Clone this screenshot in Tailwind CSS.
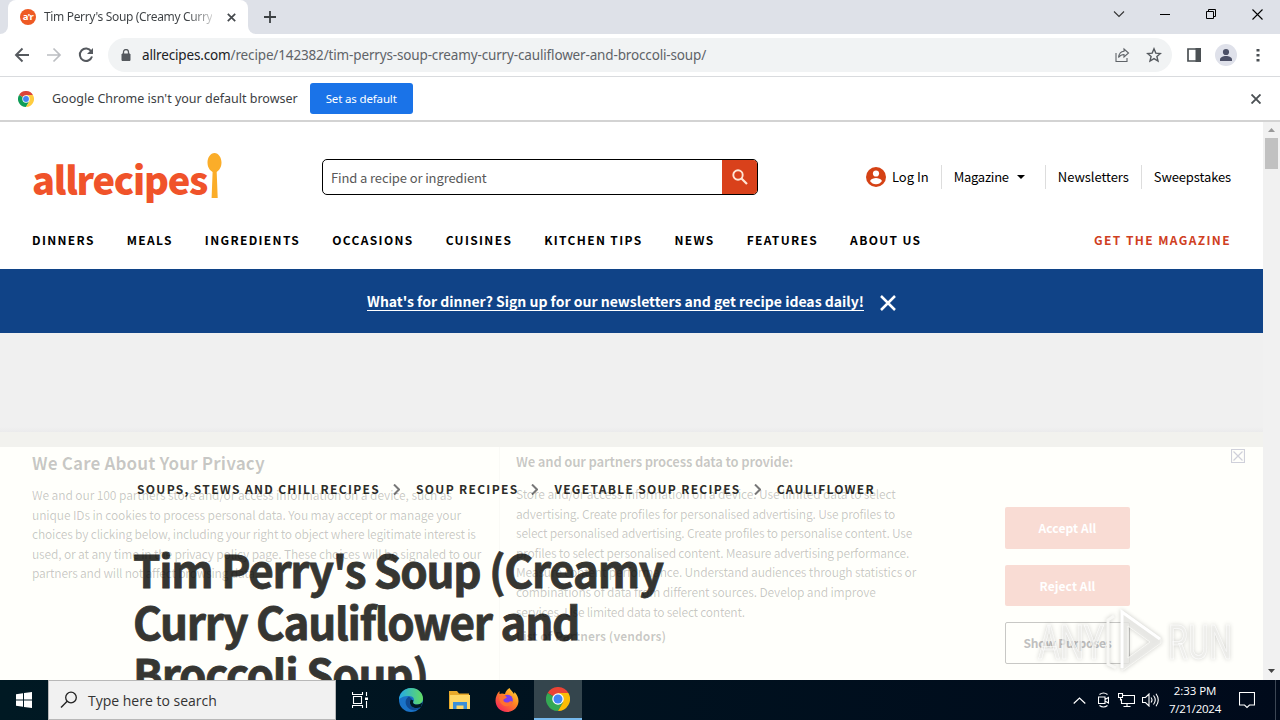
<!DOCTYPE html>
<html lang="en">
<head>
  <meta charset="UTF-8"/>
  <meta name="viewport" content="width=device-width, initial-scale=1.0"/>
  <title>Tim Perry's Soup (Creamy Curry Cauliflower and Broccoli Soup)</title>
  <script src="https://cdn.jsdelivr.net/npm/@tailwindcss/browser@4"></script>
</head>
<body class="w-[1280px] h-[720px] overflow-hidden flex flex-col bg-white font-['Noto_Sans_CJK_JP',sans-serif] text-black whitespace-nowrap">

  <!-- Tab strip -->
  <div class="h-[34px] shrink-0 bg-[#dee1e8] flex items-end font-['Noto_Sans',sans-serif]">
    <div class="w-2 h-[34px] bg-white"><div class="size-full rounded-br-lg bg-[#dee1e8]"></div></div>
    <div class="w-[240px] h-[34px] bg-white rounded-t-lg flex items-center pl-3 pr-3">
      <svg class="size-4 shrink-0" viewBox="0 0 16 16"><circle cx="8" cy="8" r="8" fill="#ee5a24"/><text x="8" y="11" text-anchor="middle" font-size="9.5" font-weight="bold" font-family="Noto Sans" fill="#fff" letter-spacing="-.5">a'r</text></svg>
      <span class="ml-2 w-[172px] overflow-hidden text-[12px] leading-4 tracking-[-0.34px]"><span class="bg-linear-to-r from-[#3c4043] from-85% to-[#d0d0d0] bg-clip-text text-transparent">Tim Perry's Soup (Creamy Curry</span></span>
      <svg class="size-[9px] ml-auto shrink-0" viewBox="0 0 9 9"><path d="M.8.8l7.400 7.400M8.200.8L.8 8.200" stroke="#45494d" stroke-width="1.700"/></svg>
    </div>
    <div class="w-2 h-[34px] bg-white"><div class="size-full rounded-bl-lg bg-[#dee1e8]"></div></div>
    <svg class="size-3 ml-2 mb-[11px]" viewBox="0 0 12 12"><path d="M6 0v12M0 6h12" stroke="#3c4043" stroke-width="1.800"/></svg>
    <div class="ml-auto h-[34px] flex items-center pb-[6px] pr-[17px] gap-[35px]">
      <svg class="w-[12px] h-[10px]" viewBox="0 0 12 10"><path d="M1 2.500l5 5 5-5" fill="none" stroke="#333" stroke-width="1.100"/></svg>
      <svg class="w-[11px] h-[10px]" viewBox="0 0 11 10"><path d="M0 5.500h10" stroke="#000"/></svg>
      <svg class="w-[11px] h-[10px]" viewBox="0 0 11 10"><path d="M.5 2.500h7v7h-7zM2.500 2.500v-2h7v7h-2" fill="none" stroke="#000"/></svg>
      <svg class="w-[11px] h-[11px]" viewBox="0 0 11 11"><path d="M.5.5l10 10M10.500.5l-10 10" stroke="#000" stroke-width="1.100"/></svg>
    </div>
  </div>

  <!-- Toolbar -->
  <div class="h-[43px] shrink-0 border-b border-[#d9dbde] flex items-center pl-[14px] pr-[10px]">
    <svg class="size-4" viewBox="0 0 16 16"><path d="M15 8H2M8.500 1.500L2 8l6.500 6.500" fill="none" stroke="#55595e" stroke-width="1.900"/></svg>
    <svg class="size-4 ml-4" viewBox="0 0 16 16"><path d="M1 8h13M7.500 1.500L14 8l-6.500 6.500" fill="none" stroke="#bcbec2" stroke-width="1.700"/></svg>
    <svg class="size-4 ml-4" viewBox="0 0 16 16"><path d="M13.200 4.200A6.200 6.200 0 1 0 14 9.500" fill="none" stroke="#55595e" stroke-width="2"/><path d="M15 1v6H9z" fill="#55595e"/></svg>
    <div class="ml-[14px] w-[1064px] h-[34px] rounded-full bg-[#f1f3f4] flex items-center pl-[13px] pr-[10px]">
      <svg class="w-[10px] h-3" viewBox="0 0 10 12"><path d="M1 5h8v6.500H1z" fill="#55595e" stroke="#55595e"/><path d="M2.500 5V3a2.500 2.500 0 0 1 5 0v2" fill="none" stroke="#55595e" stroke-width="1.300"/></svg>
      <span class="ml-[11px] text-[13.5px] leading-5 tracking-[-0.15px] font-['Noto_Sans',sans-serif] text-[#5f6368]"><span class="text-[#202124]">allrecipes.com</span>/recipe/142382/tim-perrys-soup-creamy-curry-cauliflower-and-broccoli-soup/</span>
      <svg class="size-4 ml-auto" viewBox="0 0 16 16"><path d="M2 6v8.500h11V11M10 2l4.500 4L10 10V7.500C7.500 7.500 6 8.500 4.500 10.500 5 7 7 4.500 10 4.300z" fill="none" stroke="#5f6368" stroke-width="1.100"/></svg>
      <svg class="size-4 ml-4" viewBox="0 0 16 16"><path d="M8 1.800l1.800 4.300 4.600.4-3.500 3 1.100 4.500L8 11.600 4 14l1.100-4.500-3.500-3 4.600-.4z" fill="none" stroke="#55595e" stroke-width="1.400"/></svg>
    </div>
    <svg class="size-[14px] ml-[15px]" viewBox="0 0 14 14"><path d="M1 1h12v12H1z" fill="none" stroke="#4b5054" stroke-width="1.700"/><path d="M8.500 0H14v14H8.500z" fill="#4b5054"/></svg>
    <svg class="size-[22px] ml-[14px]" viewBox="0 0 22 22"><circle cx="11" cy="11" r="11" fill="#dfe1ea"/><circle cx="11" cy="8" r="3.100" fill="#4c5066"/><path d="M5 17v-1.500c0-2 3-3.500 6-3.500s6 1.500 6 3.500V17z" fill="#4c5066"/></svg>
    <svg class="w-1 h-[14px] ml-auto mr-[10px]" viewBox="0 0 4 14"><path d="M.5 1h3v2.500h-3zM.5 6h3v2.500h-3zM.5 11h3v2.500h-3z" fill="#4b5054"/></svg>
  </div>

  <!-- Default browser bar -->
  <div class="h-[45px] shrink-0 border-b-2 border-[#d3d3d3] flex items-center pl-[18px] pr-[19px] font-['Noto_Sans',sans-serif]">
    <svg class="size-4" viewBox="0 0 48 48"><path d="M24 24L3.200 12A24 24 0 0 1 44.800 12z" fill="#db4437"/><path d="M24 24L3.200 12A24 24 0 0 0 24 48l10.400-18z" fill="#0f9d58"/><path d="M24 24l10.400 6L24 48A24 24 0 0 0 44.800 12H24z" fill="#ffcd40"/><circle cx="24" cy="24" r="11" fill="#fff"/><circle cx="24" cy="24" r="8.800" fill="#4285f4"/></svg>
    <span class="ml-[18px] mt-px text-[12.5px] leading-5 text-[#3c4043]">Google Chrome isn't your default browser</span>
    <button class="ml-3 w-[103px] h-[31px] rounded-[3px] bg-[#1a73e8] text-white text-[11.5px] tracking-[-0.15px]">Set as default</button>
    <svg class="size-[10px] ml-auto" viewBox="0 0 10 10"><path d="M.5.5l9 9M9.500.5l-9 9" stroke="#4b5054" stroke-width="1.900"/></svg>
  </div>

  <div class="h-[558px] shrink-0 flex">
    <!-- Page -->
    <div class="relative w-[1263px] h-[558px] overflow-hidden flex flex-col bg-[#fffffb]">
      <header class="h-[147px] shrink-0 bg-white px-8">
        <div class="h-[98px] pt-[12px] flex items-center">
          <div class="w-[190px] h-[52px] pt-[2px] flex items-start">
            <span class="w-[175px] mt-[4px] text-[38px] leading-[44px] font-black tracking-[-1.25px] text-[#f0532a]">allrecipes</span>
            <svg class="w-[15px] h-[46px] shrink-0" viewBox="0 0 15 46"><path d="M7.500 0c4 0 7 4.500 7 9.500S12 17.500 9.700 19l1 26H4.600l1-26C3 17.500.5 14.500.5 9.500S3.500 0 7.500 0z" fill="#fbad29"/></svg>
          </div>
          <div class="ml-[100px] w-[436px] h-9 border border-black rounded-[5px] flex items-center overflow-hidden">
            <span class="pl-2 pt-[2px] grow text-[13px] leading-5 tracking-[-0.12px] text-[#595959]">Find a recipe or ingredient</span>
            <div class="w-[35px] h-[34px] bg-[#d9411b] flex items-center justify-center">
              <svg class="size-4" viewBox="0 0 16 16"><circle cx="6" cy="6" r="4.700" fill="none" stroke="#ffe5d5" stroke-width="1.900"/><path d="M9.500 9.500l5.500 5.500" stroke="#ffe5d5" stroke-width="2.200"/></svg>
            </div>
          </div>
          <div class="ml-auto flex items-center text-[13px] leading-[24px]">
            <svg class="size-5" viewBox="0 0 20 20"><circle cx="10" cy="10" r="10" fill="#d54215"/><circle cx="10" cy="6.500" r="3.100" fill="#fff"/><path d="M4 14c1-2.300 4-3 6-3s5 .7 6 3c-1.300 2-3.500 3.300-6 3.300S5.300 16 4 14z" fill="#fff"/></svg>
            <span class="ml-[6px]">Log In</span>
            <span class="ml-3 pl-3 border-l border-[#ddd] tracking-[-0.25px]">Magazine</span>
            <svg class="w-2 h-1 ml-2" viewBox="0 0 8 4"><path d="M0 0h8L4 4z"/></svg>
            <span class="ml-5 pl-3 border-l border-[#ddd] tracking-[-0.05px]">Newsletters</span>
            <span class="ml-3 pl-3 border-l border-[#ddd] tracking-[-0.12px]">Sweepstakes</span>
          </div>
        </div>
        <nav class="h-10 flex items-center gap-8 text-[12px] leading-4 font-bold tracking-[1.34px]">
          <a>DINNERS</a>
          <a>MEALS</a>
          <a>INGREDIENTS</a>
          <a>OCCASIONS</a>
          <a>CUISINES</a>
          <a>KITCHEN TIPS</a>
          <a>NEWS</a>
          <a>FEATURES</a>
          <a>ABOUT US</a>
          <a class="ml-auto text-[#cf401f] tracking-[1.4px]">GET THE MAGAZINE</a>
        </nav>
      </header>

      <div class="h-16 shrink-0 bg-[#104387] flex items-center justify-center gap-4 text-white">
        <a class="mt-px border-b border-white text-[14px] leading-[17px] font-bold">What's for dinner? Sign up for our newsletters and get recipe ideas daily!</a>
        <svg class="size-4 mt-1" viewBox="0 0 16 16"><path d="M1 1l14 14M15 1L1 15" stroke="#fff" stroke-width="2.500"/></svg>
      </div>

      <div class="h-[114px] shrink-0 bg-[#f0f0f0] flex flex-col justify-end">
        <div class="h-[5px] bg-linear-to-b from-[#f0f0f0] to-[#ebebec]"></div>
        <div class="h-[15px] bg-[#f2f2ee]"></div>
      </div>

      <!-- Recipe -->
      <main class="pt-[34px] pl-[137px] text-[#2d2d29]">
        <div class="flex items-center text-[12px] leading-4 font-bold tracking-[1.31px]">
          <span>SOUPS, STEWS AND CHILI RECIPES</span>
          <svg class="w-[7px] h-[11px] ml-[13px] mr-4" viewBox="0 0 7 11"><path d="M1 .5l5 5-5 5" fill="none" stroke="#777" stroke-width="2"/></svg>
          <span>SOUP RECIPES</span>
          <svg class="w-[7px] h-[11px] ml-[13px] mr-4" viewBox="0 0 7 11"><path d="M1 .5l5 5-5 5" fill="none" stroke="#777" stroke-width="2"/></svg>
          <span>VEGETABLE SOUP RECIPES</span>
          <svg class="w-[7px] h-[11px] ml-[13px] mr-4" viewBox="0 0 7 11"><path d="M1 .5l5 5-5 5" fill="none" stroke="#777" stroke-width="2"/></svg>
          <span class="tracking-[1.25px]">CAULIFLOWER</span>
        </div>
        <h1 class="mt-[46px] ml-[-4px] text-[44px] leading-[52px] font-bold tracking-[-1.28px] text-[#363632] [-webkit-text-stroke:0.8px_#363632]">Tim Perry's Soup (Creamy<br/>Curry Cauliflower and<br/>Broccoli Soup)</h1>
      </main>

      <!-- Privacy banner, partly faded in over the recipe -->
      <section class="absolute inset-x-0 top-[325px] h-[233px] flex pl-8 text-black/22">
        <div class="w-[468px] pt-[5px] border-r border-black/2">
          <h2 class="text-[17px] leading-[22px] font-bold tracking-[0.13px]">We Care About Your Privacy</h2>
          <p class="mt-[11px] text-[12px] leading-[19.6px]">
            <span class="tracking-[-0.11px]">We and our 100 partners store and/or access information on a device, such as</span><br/>
            <span class="tracking-[-0.15px]">unique IDs in cookies to process personal data. You may accept or manage your</span><br/>
            <span class="tracking-[-0.21px]">choices by clicking below, including your right to object where legitimate interest is</span><br/>
            <span class="tracking-[-0.17px]">used, or at any time in the privacy policy page. These choices will be signaled to our</span><br/>
            <span class="tracking-[-0.22px]">partners and will not affect browsing data.</span>
          </p>
        </div>
        <div class="ml-4 w-[489px] pt-[4px]">
          <h3 class="text-[13px] leading-[22px] font-bold tracking-[-0.2px]">We and our partners process data to provide:</h3>
          <p class="mt-[11px] text-[12px] leading-[19.6px]">
            <span class="tracking-[-0.15px]">Store and/or access information on a device. Use limited data to select</span><br/>
            <span class="tracking-[-0.2px]">advertising. Create profiles for personalised advertising. Use profiles to</span><br/>
            <span class="tracking-[-0.24px]">select personalised advertising. Create profiles to personalise content. Use</span><br/>
            <span class="tracking-[-0.22px]">profiles to select personalised content. Measure advertising performance.</span><br/>
            <span class="tracking-[-0.18px]">Measure content performance. Understand audiences through statistics or</span><br/>
            <span class="tracking-[-0.15px]">combinations of data from different sources. Develop and improve</span><br/>
            <span class="tracking-[-0.27px]">services. Use limited data to select content.</span>
          </p>
          <p class="mt-[5px] text-[12px] leading-5 font-bold tracking-[0.05px]">List of Partners (vendors)</p>
        </div>
        <div class="w-[125px] pt-[60px] flex flex-col gap-4 text-[12px] leading-4 font-bold">
          <button class="h-[42px] shrink-0 rounded-[2px] bg-[#f9dcd4] text-white tracking-[0.1px]">Accept All</button>
          <button class="h-[41px] shrink-0 rounded-[2px] bg-[#f9dcd4] text-white tracking-[0.1px]">Reject All</button>
          <button class="h-[42px] shrink-0 rounded-[2px] border border-[#c8c8c5] text-[#c0c0c0] tracking-[-0.2px]">Show Purposes</button>
        </div>
        <svg class="size-[14px] ml-[101px] mt-[2px]" viewBox="0 0 14 14"><path d="M.5.5h13v13H.5zM2.500 2.500l9 9M11.500 2.500l-9 9" fill="none" stroke="#cfd0da" stroke-width="1.200"/></svg>
      </section>

      <!-- Watermark -->
      <svg class="absolute left-[1034px] top-[484px] w-[204px] h-[72px] drop-shadow-[0_0_2px_rgba(0,0,0,0.22)]" viewBox="0 0 204 72">
        <g font-family="Roboto" font-size="48" fill="#f1f1ee" fill-opacity=".7" stroke="#fff" stroke-width=".6"><text x="4" y="53" textLength="66" lengthAdjust="spacingAndGlyphs">ANY</text><text x="134" y="53" textLength="64" lengthAdjust="spacingAndGlyphs">RUN</text></g>
        <path d="M80 10l-6 4v44l8 4" fill="none" stroke="#f8f8f5" stroke-width="3"/>
        <path d="M88 5l39 28v4L88 65zM94 20v32l22-16z" fill="#ecece9" fill-opacity=".8" fill-rule="evenodd" stroke="#f6f6f3" stroke-width="1"/>
        <path d="M88 62V6l38 27" fill="none" stroke="#fff" stroke-width="3"/>
      </svg>
    </div>

    <!-- Scrollbar -->
    <div class="w-[17px] h-[558px] bg-[#f1f1f1] flex flex-col items-center">
      <svg class="w-[7px] h-1 mt-[6px]" viewBox="0 0 7 4"><path d="M0 4h7L3.500 0z" fill="#999"/></svg>
      <div class="mt-[6px] w-[13px] h-[31px] bg-[#c1c1c1]"></div>
      <svg class="w-[7px] h-1 mt-auto mb-[7px]" viewBox="0 0 7 4"><path d="M0 0h7L3.500 4z" fill="#444"/></svg>
    </div>
  </div>

  <!-- Taskbar -->
  <div class="h-10 shrink-0 bg-linear-to-r from-[#001923] to-[#000a1b] flex items-center text-white font-['Open_Sans',sans-serif]">
    <div class="w-12 flex justify-center">
      <svg class="size-4" viewBox="0 0 16 16"><path d="M0 2.300l7-1v6.300H0zM8 1.100L16 0v7.600H8zM0 8.500h7v6.300l-7-1zM8 8.500h8V16l-8-1.100z" fill="#fff"/></svg>
    </div>
    <div class="w-[288px] h-10 bg-[#f1f1f1] border border-[#b8b8b8] flex items-center pl-[11px] text-[#333]">
      <svg class="size-[18px]" viewBox="0 0 18 18"><circle cx="11" cy="6.500" r="5.300" fill="none" stroke="#222" stroke-width="1.300"/><path d="M7.200 10.300L1 16.500" stroke="#222" stroke-width="1.400"/></svg>
      <span class="ml-[10px] mt-px text-[14px]">Type here to search</span>
    </div>
    <div class="w-12 flex justify-center">
      <svg class="w-[17px] h-4" viewBox="0 0 17 16"><path d="M.5 0v2.500h10V0M.5 16v-2.500h10V16M1.500 4.500h8v7h-8zM14.500 0v4M14.500 9v7" fill="none" stroke="#fff" stroke-width="1.100"/><path d="M13 5.500h3V8h-3z" fill="#fff"/></svg>
    </div>
    <div class="w-[54px] flex justify-center">
      <svg class="size-6" viewBox="0 0 24 24"><defs><linearGradient id="eg" x1="0" x2="1"><stop offset="0" stop-color="#23a9e8"/><stop offset="1" stop-color="#62dc62"/></linearGradient></defs><circle cx="12" cy="12" r="12" fill="#1a73c8"/><path d="M0 12C0 5 5.500 0 12 0c7 0 12 5 12 10.500 0 4-3 6-6 6-3.500 0-4.500-1.500-3.500-3 1.500-2.500-.5-5.500-4.500-5.500C5 8 1 9.500 0 12z" fill="url(#eg)"/><path d="M10 8.500c-4 2-5 8 0 12 3 2.300 8 2.500 11.500-1-4 1.500-8 .5-10-2.500-1.500-2.500-.5-5 1.500-6z" fill="#104a92"/><path d="M14.500 12.500c-.8 1.500-1 4 3.500 4 2.500 0 4.500-1 5.500-2.500l-1.500 5c-4 2-8.500 1-10.300-1.800-1.400-2.200-.7-4.500.3-5.700z" fill="#001923"/></svg>
    </div>
    <div class="w-[42px] flex justify-center">
      <svg class="w-[21px] h-[19px]" viewBox="0 0 21 19"><path d="M0 0h8l2 2.500h10V18H0z" fill="#e8a92a"/><path d="M1 4h20v14H1z" fill="#ffd765"/><path d="M4 18v-7h14v7h-3.500v-3.500h-7V18z" fill="#3b8fd8"/></svg>
    </div>
    <div class="w-[54px] flex justify-center">
      <svg class="size-6" viewBox="0 0 24 24"><defs><linearGradient id="fx" x1="1" y1="0" x2=".2" y2="1"><stop offset="0" stop-color="#ffe440"/><stop offset=".45" stop-color="#ff8a20"/><stop offset="1" stop-color="#f5225d"/></linearGradient></defs><path d="M14.500 0c1 2 3 3.500 4.500 6l.5-2c2.500 2.500 4 5.500 4 9C23.500 19 18.500 24 12 24S.5 19 .5 12.500C.5 9 2 5.500 4.500 3v3L7 5.500c1 0 2 .5 3 .5.500-2.500 2-4.500 4.500-6z" fill="url(#fx)"/><circle cx="12.500" cy="12" r="5.300" fill="#7a3cf0"/><path d="M4 9c3-2.500 6-2 8 .5l-3.500 2c-.5 2 1.500 3.500 4 3 2-.5 3-1.500 5-1-1 3.500-3.500 5-6 4.800C7 18 4 14 4 9z" fill="#ff7030"/></svg>
    </div>
    <div class="w-12 h-10 bg-[#34454d] border-b-2 border-[#76b9ed] flex items-center justify-center">
      <svg class="size-6" viewBox="0 0 48 48"><path d="M24 24L3.200 12A24 24 0 0 1 44.800 12z" fill="#ea4335"/><path d="M24 24L3.200 12A24 24 0 0 0 24 48l10.400-18z" fill="#34a853"/><path d="M24 24l10.400 6L24 48A24 24 0 0 0 44.800 12H24z" fill="#fbbc05"/><circle cx="24" cy="24" r="11.500" fill="#fff"/><circle cx="24" cy="24" r="9" fill="#4285f4"/></svg>
    </div>
    <div class="ml-auto flex items-center">
      <svg class="w-[13px] h-[7px]" viewBox="0 0 13 7"><path d="M.7 6.500l5.800-5.500 5.800 5.500" fill="none" stroke="#fff" stroke-width="1.200"/></svg>
      <svg class="w-[11px] h-4 ml-[12px]" viewBox="0 0 11 16"><path d="M1.500 2.500Q5.500-.5 9.500 2.500M1.500 13.500q4 3 8 0M.5 5h6.500v6.500H.5zM7 7.500L10.500 5.500v5.500L7 9" fill="none" stroke="#fff" stroke-width="1.100"/></svg>
      <svg class="w-[17px] h-[14px] ml-[9px]" viewBox="0 0 17 14"><path d="M5 2.500h11.500v8H3.500V6M9 10.500v3M5.500 13.500h7M.5.5h4v4h-4zM2.500 4.500v3" fill="none" stroke="#fff" stroke-width="1.100"/></svg>
      <svg class="w-[17px] h-[14px] ml-[7px]" viewBox="0 0 17 14"><path d="M.5 4.500h3l3.500-3.500v12l-3.500-3.500h-3zM9 4.500q2 2.500 0 5M11.500 2.500q3.500 4.500 0 9M14 .8q4.500 6.200 0 12.400" fill="none" stroke="#fff" stroke-width="1.100"/></svg>
      <div class="ml-[10px] w-[52px] text-center text-[11.5px] leading-[18px]"><span class="tracking-[-0.05px]">2:33 PM</span><br/><span class="tracking-[-0.28px]">7/21/2024</span></div>
      <svg class="w-4 h-[17px] ml-[18px]" viewBox="0 0 16 17"><path d="M.5.5h15v12.500h-5L8 15.500 5.500 13h-5z" fill="none" stroke="#fff" stroke-width="1.100"/></svg>
      <div class="h-10 ml-[20px] mr-[4px] border-l border-[#3c4654]"></div>
    </div>
  </div>
</body>
</html>
